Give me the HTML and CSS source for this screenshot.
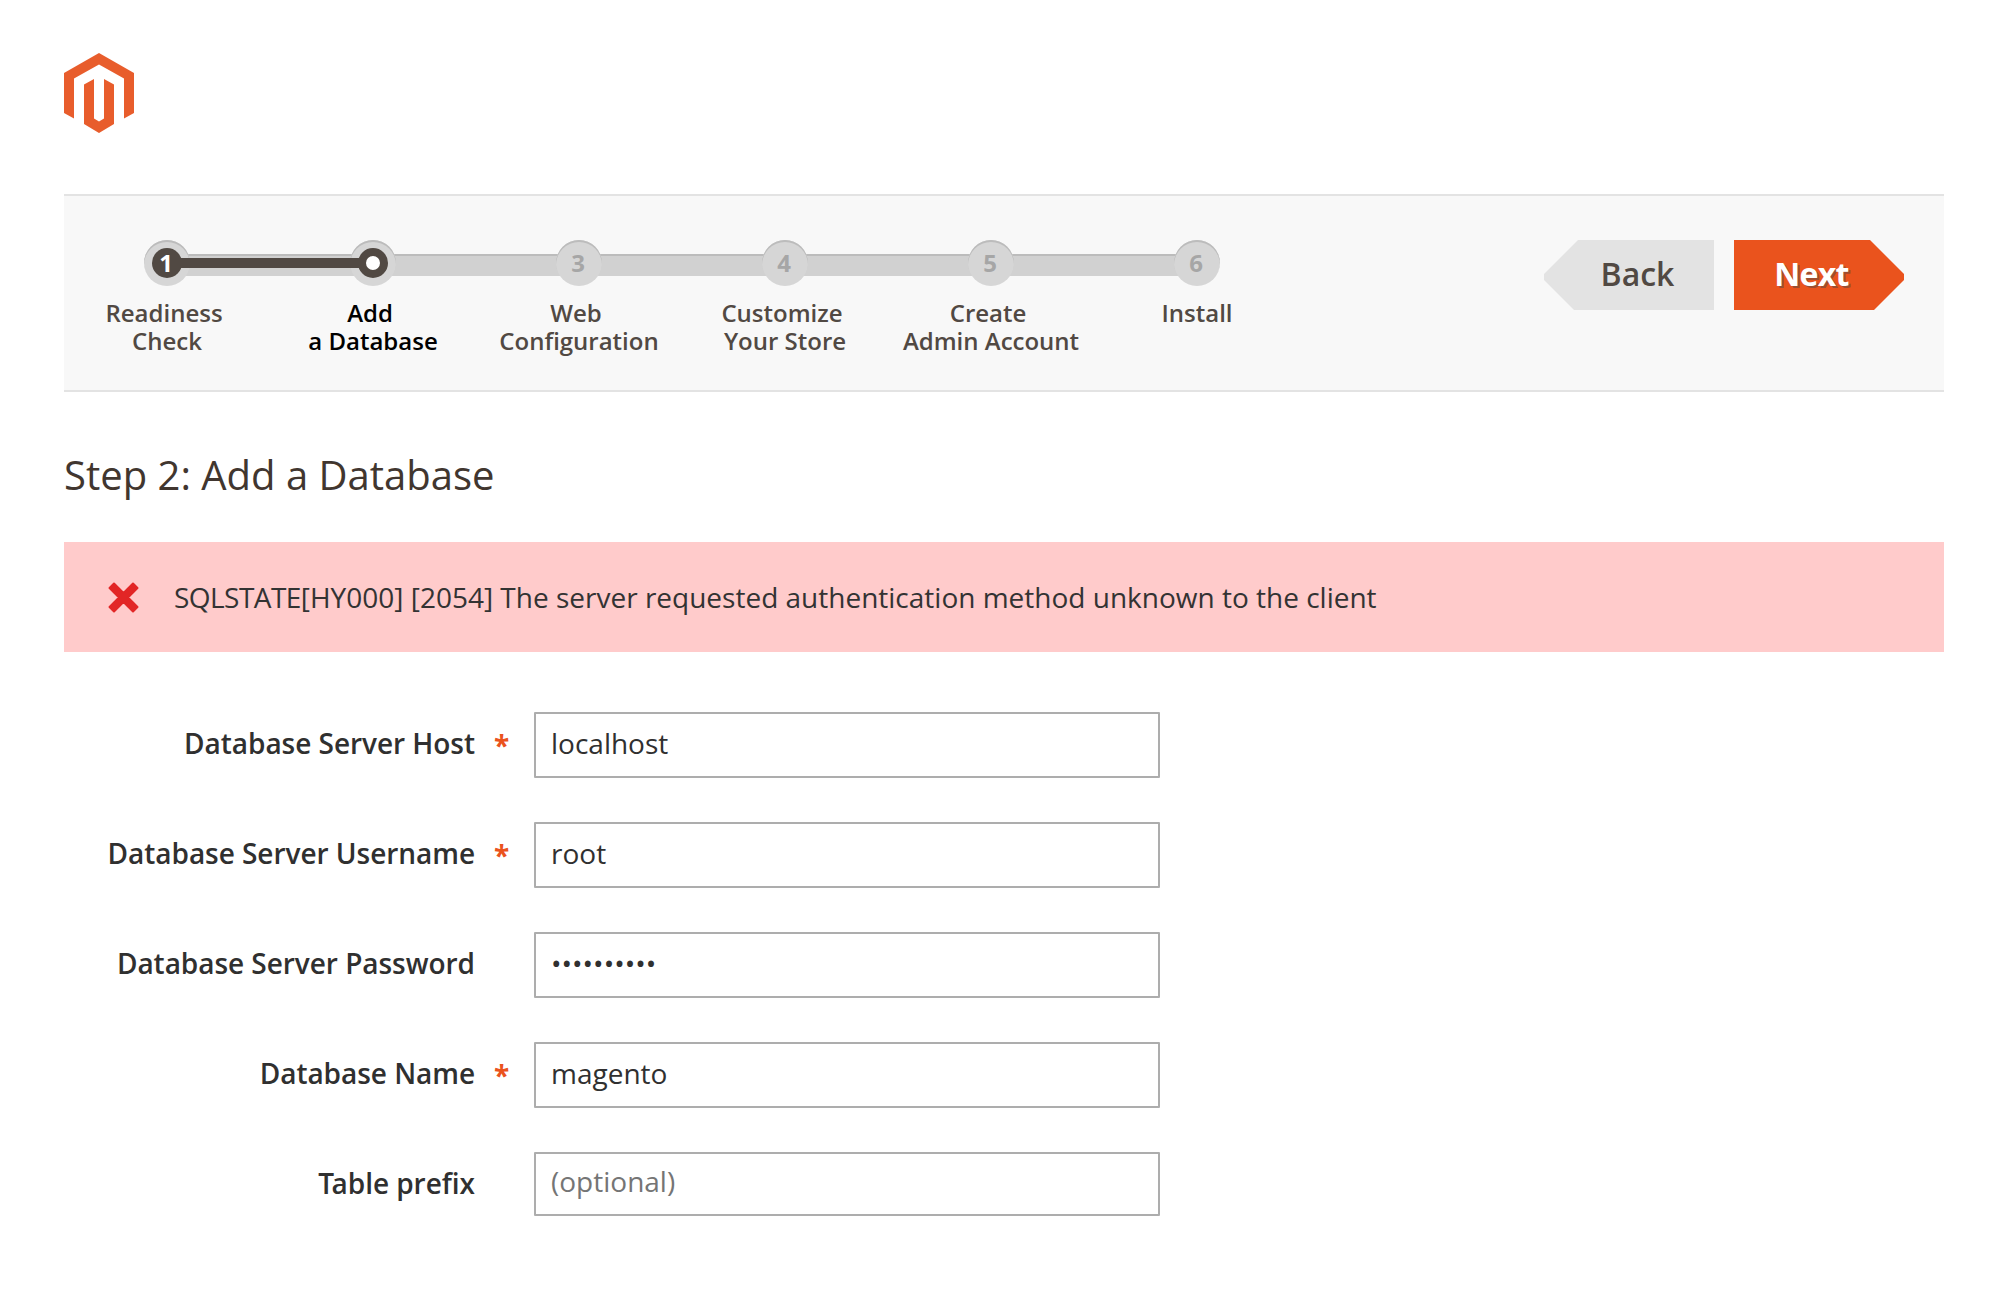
FILE: index.html
```html
<!DOCTYPE html>
<html lang="en">
<head>
<meta charset="utf-8">
<title>Magento Installation</title>
<link rel="stylesheet" href="styles.css">
</head>
<body>
<header class="header">
  <svg class="logo" viewBox="0 0 70 80" role="img" aria-label="Magento">
    <path fill="#e85d2c" d="M35 0L70 20V60L60 65.500V25.500L35 11.500L10 25.500V65.500L0 60V20Z"/>
    <path fill="#e85d2c" d="M30 26V65.500L35 68.500L40 65.500V26L50 31.500V71L35 80L20 71V31.500Z"/>
  </svg>
</header>
<nav class="nav">
  <ol class="steps">
    <li class="step step-done"><span class="dot"><span class="num">1</span></span><span class="line">Readiness</span><span>Check</span></li>
    <li class="step step-active"><span class="dot"><span class="num"></span></span><span class="line">Add</span><span>a Database</span></li>
    <li class="step"><span class="dot"><span class="num">3</span></span><span class="line">Web</span><span>Configuration</span></li>
    <li class="step"><span class="dot"><span class="num">4</span></span><span class="line">Customize</span><span>Your Store</span></li>
    <li class="step"><span class="dot"><span class="num">5</span></span><span class="line">Create</span><span>Admin Account</span></li>
    <li class="step"><span class="dot"><span class="num">6</span></span><span>Install</span></li>
  </ol>
  <div class="actions">
    <button class="btn btn-back" type="button">Back</button>
    <button class="btn btn-next" type="button">Next</button>
  </div>
</nav>
<main>
  <h1 class="title">Step 2: Add a Database</h1>
  <div class="message">
    <svg class="message-icon" viewBox="0 0 31 31" aria-hidden="true"><path d="M6 1.500L15.500 11L25 1.500L29.500 6L20 15.500L29.500 25L25 29.500L15.500 20L6 29.500L1.500 25L11 15.500L1.500 6Z" fill="#e22626" stroke="#e22626" stroke-width="2" stroke-linejoin="round"/></svg>
    <span><span class="code">SQLSTATE</span>[HY000] [2054] The server requested authentication method unknown to the client</span>
  </div>
  <form class="form">
    <div class="field"><label class="label required" for="host">Database Server Host</label><input class="input" id="host" type="text" value="localhost"></div>
    <div class="field"><label class="label required" for="user">Database Server Username</label><input class="input" id="user" type="text" value="root"></div>
    <div class="field"><label class="label" for="password">Database Server Password</label><input class="input" id="password" type="password" value="magento123"></div>
    <div class="field"><label class="label required" for="name">Database Name</label><input class="input" id="name" type="text" value="magento"></div>
    <div class="field"><label class="label" for="prefix"><span class="kern">T</span>able prefix</label><input class="input input-short" id="prefix" type="text" placeholder="(optional)"></div>
  </form>
</main>
</body>
</html>
```

FILE: styles.css
```css
* { box-sizing: border-box; }
body {
  margin: 0;
  padding: 53px 64px 0;
  background: #fff;
  color: #303030;
  font: 28px/38px "Open Sans", sans-serif;
}
.logo { display: block; width: 70px; height: 80px; }
.nav {
  display: flex;
  justify-content: space-between;
  height: 198px;
  margin-top: 61px;
  padding: 44px 40px 0 0;
  background: #f8f8f8;
  border-top: 2px solid #e3e3e3;
  border-bottom: 2px solid #e3e3e3;
}
.steps { display: flex; margin: 0; padding: 0; list-style: none; }
.step {
  position: relative;
  display: flex;
  flex-direction: column;
  align-items: center;
  width: 206px;
  color: #514943;
  font-size: 24px;
  font-weight: 600;
  line-height: 28px;
  white-space: nowrap;
}
.step-active { color: #000; }
.line { padding-right: 6px; }
.dot {
  position: relative;
  z-index: 2;
  display: flex;
  align-items: center;
  justify-content: center;
  width: 46px;
  height: 46px;
  margin-bottom: 13px;
  border-radius: 50%;
  background: #d6d6d6;
  box-shadow: inset 0 2px 0 #bcbcbc;
}
.num {
  display: flex;
  align-items: center;
  justify-content: center;
  width: 30px;
  height: 30px;
  padding-right: 2px;
  border-radius: 50%;
  color: #a6a6a6;
  font-weight: 700;
}
.step-done .num { background: #514943; color: #fff; }
.step-active .num { padding: 0; border: 8px solid #514943; background: #fff; }
/* Track joining each step to the next */
.step:not(:last-child)::before {
  content: "";
  position: absolute;
  top: 14px;
  left: 103px;
  width: 206px;
  height: 20px;
  background: #d1d1d1;
  border-top: 2px solid #bcbcbc;
}
.step-done::after {
  content: "";
  position: absolute;
  z-index: 3;
  top: 18px;
  left: 116px;
  width: 180px;
  height: 10px;
  background: #514943;
}
.actions { display: flex; gap: 20px; }
.btn {
  width: 170px;
  height: 70px;
  padding: 0 0 3px;
  border: 0;
  font: 600 32px/44px "Open Sans", sans-serif;
}
.btn-back {
  padding-left: 17px;
  background: #e3e3e3;
  color: #514943;
  clip-path: polygon(34px 0, 100% 0, 100% 100%, 30px 100%, 0 40px, 0 34px);
}
.btn-next {
  padding-right: 15px;
  background: #ea531d;
  color: #fff;
  font-weight: 700;
  letter-spacing: -.7px;
  text-shadow: 2px 2px 0 rgba(81, 73, 67, .5);
  clip-path: polygon(0 0, 136px 0, 100% 34px, 100% 40px, 140px 100%, 0 100%);
}
.title {
  margin: 55px 0 0;
  color: #41362f;
  font-size: 40px;
  font-weight: 400;
  line-height: 56px;
}
.message {
  display: flex;
  align-items: center;
  height: 110px;
  margin-top: 39px;
  padding-left: 44px;
  gap: 35px;
  background: #ffcbcb;
  color: #333;
}
.message-icon { width: 31px; height: 31px; }
.code { letter-spacing: -.55px; }
.kern { letter-spacing: -2.5px; }
.form { display: grid; gap: 44px; margin-top: 60px; }
.field { display: flex; height: 66px; }
.label {
  position: relative;
  width: 411px;
  margin-right: 59px;
  padding-top: 12px;
  font-weight: 600;
  letter-spacing: -.04px;
  text-align: right;
}
.required::after {
  content: "*";
  position: absolute;
  top: 14px;
  left: 430px;
  color: #ea531d;
  font-weight: 700;
}
.input {
  width: 626px;
  height: 66px;
  padding: 0 15px 4px;
  border: 2px solid #adadad;
  border-radius: 1px;
  background: #fff;
  color: #303030;
  font: 28px/38px "Open Sans", sans-serif;
}
.input-short { height: 64px; padding-bottom: 6px; }
.input::placeholder { color: #757575; }
```
